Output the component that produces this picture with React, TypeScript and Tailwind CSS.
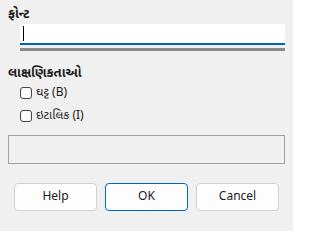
export default function App() {
  return (
    <div
      className="w-[293px] h-[231px] bg-[#f0f0f0] text-[12px] text-[#1a1a1a] flex flex-col"
      style={{ fontFamily: '"Noto Sans Gujarati", "Noto Sans", "Segoe UI", sans-serif' }}
    >
      <div className="pl-[8px] pt-[6px] h-[22px] leading-[18px] text-[13px] font-bold">ફોન્ટ</div>

      <div className="ml-[20px] mr-[8px] mt-[2px] h-[21px] bg-white border-b-2 border-[#0063b1] flex items-center pl-[3px]">
        <div className="w-px h-[15px] bg-black" />
      </div>
      <div className="ml-[20px] mr-[8px] mt-[3px] h-[3px] bg-[#8a8a8e]" />

      <div className="pl-[8px] mt-[14px] h-[18px] leading-[18px] text-[13px] font-bold">લાક્ષણિકતાઓ</div>

      <div className="pl-[20px] mt-[4px] flex flex-col gap-[11px]">
        <label className="flex items-center gap-[4px] h-[12px]">
          <span className="w-[12px] h-[12px] rounded-[3px] border border-[#444] bg-[#fbfbfb]" />
          <span className="leading-[14px]">ઘટ્ટ (B)</span>
        </label>
        <label className="flex items-center gap-[4px] h-[12px]">
          <span className="w-[12px] h-[12px] rounded-[3px] border border-[#444] bg-[#fbfbfb]" />
          <span className="leading-[14px]">ઇટાલિક (I)</span>
        </label>
      </div>

      <div className="ml-[8px] mr-[8px] mt-[13px] h-[29px] border border-[#a0a0a0] bg-[#f0f0f0]" />

      <div className="pl-[14px] mt-[19px] flex gap-[8px]">
        <button className="w-[83px] h-[28px] rounded-[4px] border border-[#d0d0d0] bg-[#fdfdfd] text-[12px]">
          Help
        </button>
        <button className="w-[83px] h-[28px] rounded-[4px] border border-[#0067c0] bg-[#fdfdfd] text-[12px]">
          OK
        </button>
        <button className="w-[83px] h-[28px] rounded-[4px] border border-[#d0d0d0] bg-[#fdfdfd] text-[12px]">
          Cancel
        </button>
      </div>
    </div>
  );
}
